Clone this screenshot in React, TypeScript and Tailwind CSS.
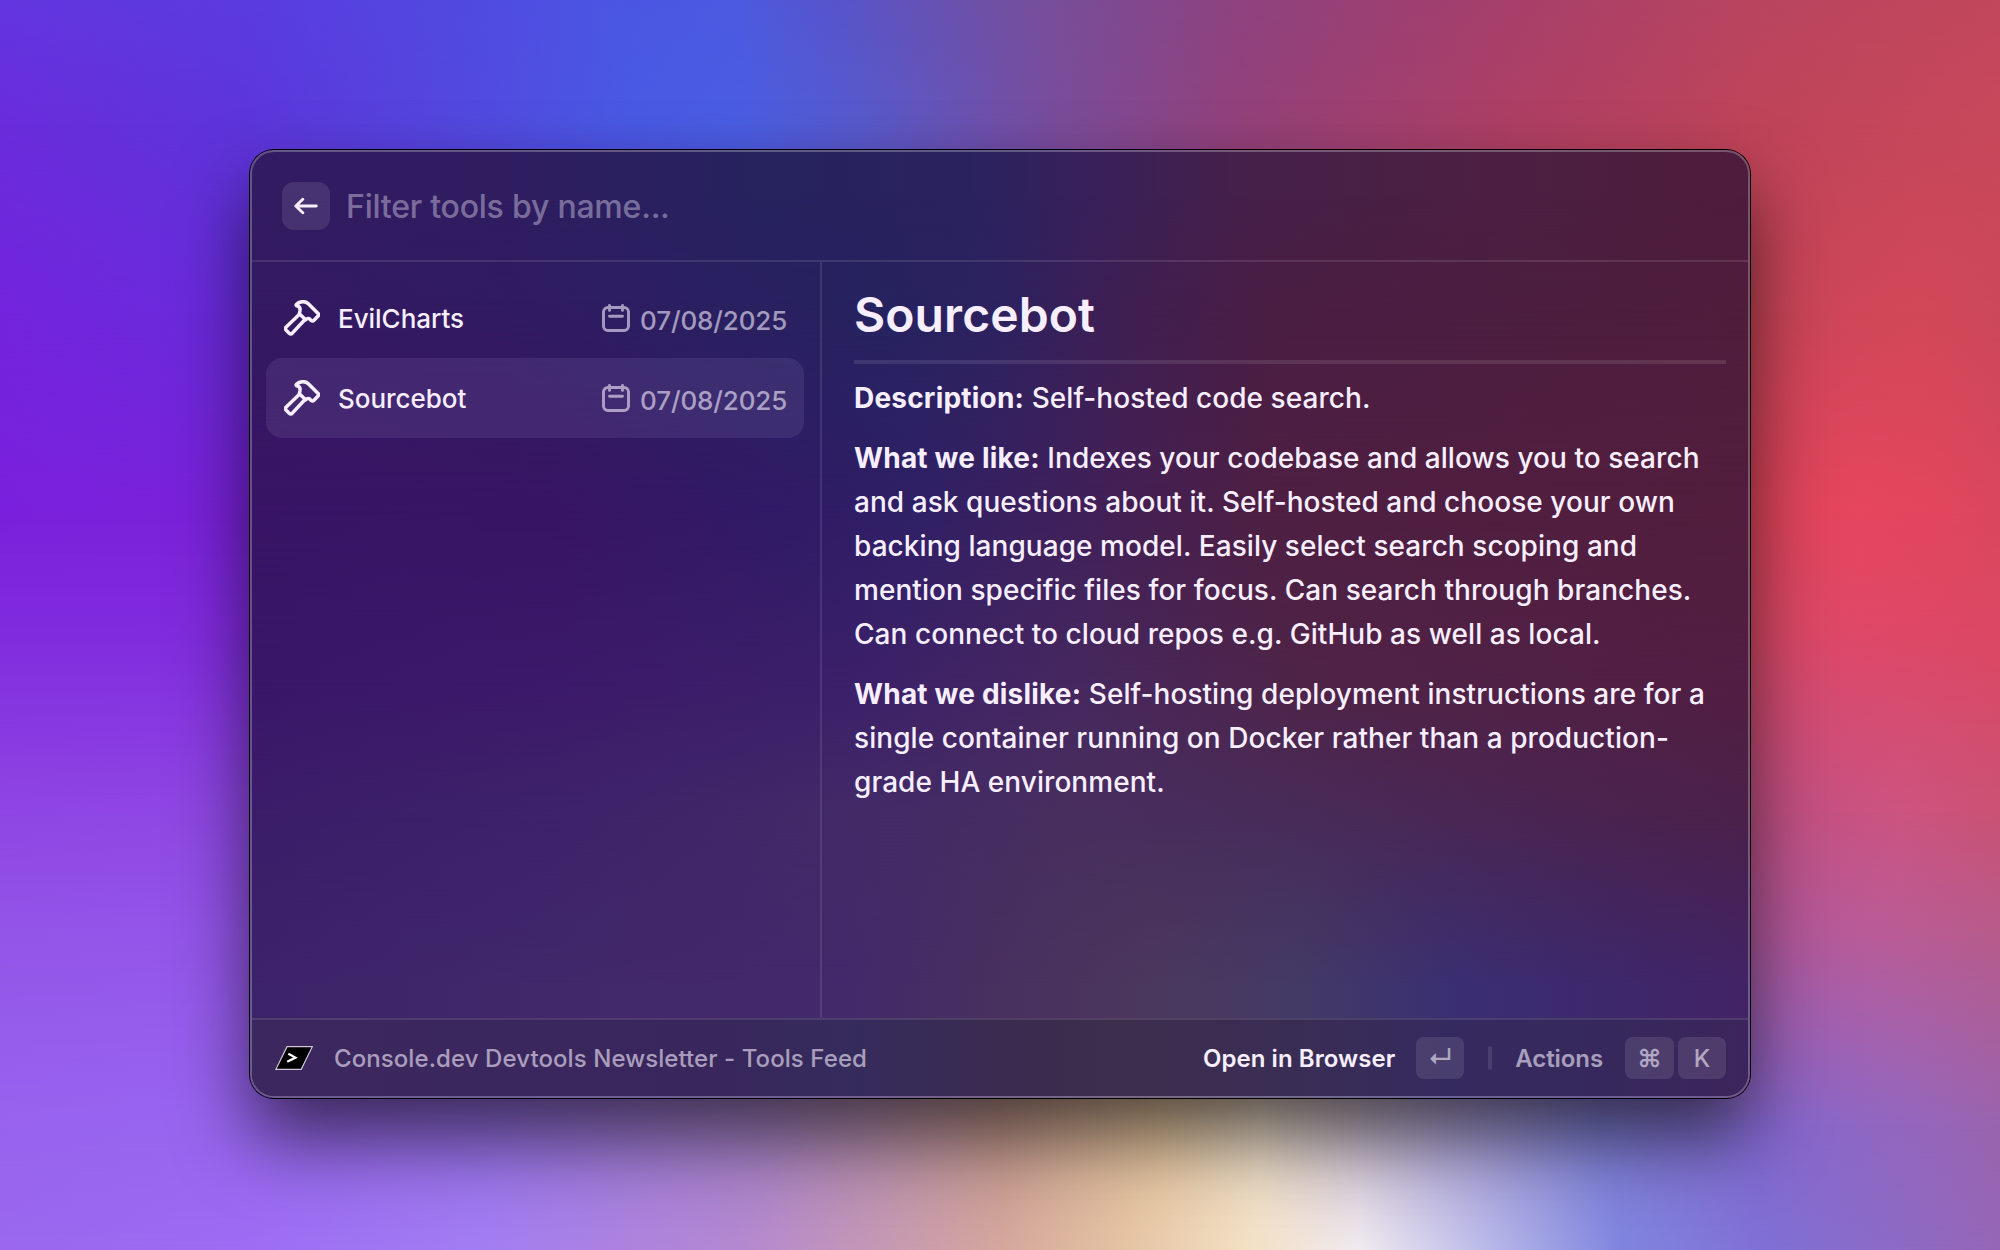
import React from 'react';

function Backdrop() {
  return (
    <div className="col-start-1 row-start-1 grid h-[1250px] w-[2000px] [&>*]:col-start-1 [&>*]:row-start-1">
      <div className="bg-[linear-gradient(90deg,#6335e0_0%,#5b3bdf_12%,#504be1_24%,#4b57e3_31%,#4c5ae0_37%,#5854ca_42%,#74509f_51%,#8e427f_62%,#a63f6b_75%,#b9455f_88%,#c2475c_100%)]" />
      <div className="bg-[linear-gradient(90deg,#6a2cdc_0%,#5d35da_12%,#524adf_24%,#4959e3_31%,#4a5ee2_37%,#575acc_43%,#7a4c9a_53%,#93417a_62%,#ad3f65_75%,#bf4459_88%,#c8485b_100%)] [mask-image:linear-gradient(180deg,transparent_0%,#000_10%)]" />
      <div className="bg-[linear-gradient(90deg,#7324dc_0%,#692cdc_12%,#5540d8_35%,#8a3c80_60%,#c04158_80%,#cc4658_90%,#d24858_96%,#cc4859_100%)] [mask-image:linear-gradient(180deg,transparent_10%,#000_25%)]" />
      <div className="bg-[linear-gradient(90deg,#7a20dc_0%,#7a22da_12%,#7030c8_35%,#a83c70_60%,#dc4458_85%,#e6465e_93%,#e2465d_97%,#da475d_100%)] [mask-image:linear-gradient(180deg,transparent_25%,#000_41%)]" />
      <div className="bg-[linear-gradient(90deg,#812cde_0%,#812cde_12%,#7b3ccd_35%,#a8507a_60%,#d84a68_85%,#de4868_93%,#dc4864_100%)] [mask-image:linear-gradient(180deg,transparent_41%,#000_51%)]" />
      <div className="bg-[linear-gradient(90deg,#8f46e3_0%,#8f48e4_12%,#8c5ccf_35%,#a8707a_60%,#c05084_88%,#cc5480_95%,#ca5274_100%)] [mask-image:linear-gradient(180deg,transparent_51%,#000_65%)]" />
      <div className="bg-[linear-gradient(90deg,#9355e8_0%,#9456ea_12%,#9268d8_35%,#b88c80_58%,#9460b0_75%,#b0589c_88%,#b85c98_94%,#b65c8c_100%)] [mask-image:linear-gradient(180deg,transparent_65%,#000_75%)]" />
      <div className="bg-[linear-gradient(90deg,#9863ee_0%,#9866f0_12%,#9a74ea_25%,#a884c8_38%,#c89c90_50%,#e8c8a0_58%,#ecdcc8_63%,#b4a8d8_72%,#8080d8_80%,#8468d0_88%,#9466bc_96%,#9a64ae_100%)] [mask-image:linear-gradient(180deg,transparent_75%,#000_90%)]" />
      <div className="bg-[linear-gradient(90deg,#9a67ee_0%,#9c6cf3_12%,#a27df2_24%,#b488d0_37%,#d4a69c_50%,#e4c2a2_56%,#f3e0c4_62.5%,#f0eaf0_68%,#bcbce9_74%,#8085de_81%,#7f70d6_88%,#8e69c2_96%,#9566b6_100%)] [mask-image:linear-gradient(180deg,transparent_90%,#000_100%)]" />
      <div className="self-end border-b border-dashed border-black/60" />
    </div>
  );
}

function WindowTint() {
  return (
    <div className="col-start-1 row-start-1 grid [&>*]:col-start-1 [&>*]:row-start-1">
      <div className="bg-[linear-gradient(90deg,#331b61_0%,#2f1d60_17%,#26235f_34%,#2a225f_48%,#38205a_56%,#462048_67%,#4c1f42_83%,#4e1c3c_100%)]" />
      <div className="bg-[linear-gradient(90deg,#341a62_0%,#311b62_17%,#2a2061_31%,#26235f_42%,#2d2260_50%,#3d1f54_57%,#4a1e44_68%,#4f1e3c_100%)] [mask-image:linear-gradient(180deg,transparent_5%,#000_16%)]" />
      <div className="bg-[linear-gradient(90deg,#391465_0%,#381564_20%,#301b66_36%,#2f2066_44%,#40205a_55%,#4e1f42_68%,#531e3d_100%)] [mask-image:linear-gradient(180deg,transparent_16%,#000_38%)]" />
      <div className="bg-[linear-gradient(90deg,#3a1768_0%,#3c1a6a_20%,#3c206a_40%,#46285f_55%,#4f2448_70%,#521e43_100%)] [mask-image:linear-gradient(180deg,transparent_38%,#000_57%)]" />
      <div className="bg-[linear-gradient(90deg,#3b1d6a_0%,#3e226a_20%,#432b67_42%,#482e5e_55%,#482c5a_68%,#4a2552_85%,#4b2149_100%)] [mask-image:linear-gradient(180deg,transparent_57%,#000_70%)]" />
      <div className="bg-[linear-gradient(90deg,#3d2369_0%,#40286b_20%,#43296a_40%,#48305f_50%,#4b385d_60%,#433a66_70%,#3a2f72_80%,#3d286c_90%,#422366_100%)] [mask-image:linear-gradient(180deg,transparent_70%,#000_88%)]" />
    </div>
  );
}

function HammerIcon() {
  return (
    <svg width="36" height="36" viewBox="43 30 108 108" fill="none" stroke="#f7efff" strokeWidth="10.500" strokeLinecap="round" strokeLinejoin="round">
      <path d="M87 75 49 111.500c-2.500 2.500-2.500 6 0 8.500l9.500 9.500c3 3 6.500 3 9.500 0L106 88.500" />
      <path d="M89 71 108 89C113 84 119 85 123 90c3 3.500 7 3.500 10 .5l11.500-11.500c3-3 3-6.500 0-9.500L116 41C107 32.500 90 32.500 80 43.500c-1.500 2-.5 3.500 1.500 4 7 1.500 10.500 7 9.500 14Z" />
    </svg>
  );
}

function CalendarIcon() {
  return (
    <svg width="28" height="28" viewBox="0 0 28 28" fill="none" stroke="currentColor" strokeWidth="2.900" strokeLinecap="round">
      <path d="M6 3.450H22a4.500 4.500 0 0 1 4.500 4.500V22a4.500 4.500 0 0 1-4.500 4.500H6A4.500 4.500 0 0 1 1.500 22V8A4.500 4.500 0 0 1 6 3.450ZM7.500 1.500v4.900M20.500 1.500v4.900M7.500 12.200h13" />
    </svg>
  );
}

function Row({ name, date, selected }: { name: string; date: string; selected?: boolean }) {
  return (
    <div className={selected ? 'flex h-20 items-center rounded-2xl bg-[#e0d0ff]/[0.09] pr-4 pl-[18px]' : 'flex h-20 items-center rounded-2xl pr-4 pl-[18px]'}>
      <HammerIcon />
      <span className="ml-[18px] text-[26px] font-medium tracking-[-0.03px] text-[#f7efff]">{name}</span>
      <span className="ml-auto flex items-center gap-2.5 text-[#f7efff]/60">
        <CalendarIcon />
        <span className="w-[148px] pt-1 text-[26px] font-medium tracking-[-0.12px]">{date}</span>
      </span>
    </div>
  );
}

function Key({ children, wide }: { children: React.ReactNode; wide?: boolean }) {
  return (
    <kbd className={wide ? 'flex h-[42px] w-[49px] items-center justify-center rounded-lg bg-white/10 font-[Inter] text-2xl font-medium text-[#f7efff]/60' : 'flex h-[42px] w-12 items-center justify-center rounded-lg bg-white/10 font-[Inter] text-2xl font-medium text-[#f7efff]/60'}>
      {children}
    </kbd>
  );
}

export default function App() {
  return (
    <div className="grid h-[1250px] w-[2000px] overflow-hidden font-[Inter,sans-serif]">
      <Backdrop />
      <div className="z-10 col-start-1 row-start-1 mt-[150px] ml-[250px] grid h-[948px] w-[1500px] overflow-hidden rounded-3xl shadow-[0_0_0_1px_#000,0_40px_76px_rgba(0,0,0,0.62)]">
        <WindowTint />
        <div className="z-10 col-start-1 row-start-1 flex flex-col overflow-hidden rounded-3xl border-2 border-white/25">
          <header className="flex h-[110px] shrink-0 items-center gap-4 border-b-2 border-white/10 pl-[30px]">
            <button className="flex size-12 items-center justify-center rounded-xl bg-white/10">
              <svg width="24" height="18" viewBox="0 0 24 18" fill="none" stroke="#f7efff" strokeWidth="2.900" strokeLinecap="round" strokeLinejoin="round">
                <path d="M22.300 9H2M8.800 2.200 1.800 9l7 6.800" />
              </svg>
            </button>
            <span className="pt-0.5 text-[32px] font-medium tracking-[-0.22px] text-[#f7efff]/40">Filter tools by name...</span>
          </header>

          <main className="flex min-h-0 flex-1">
            <aside className="w-[570px] shrink-0 border-r-2 border-white/10 px-4 pt-4 pl-3.5">
              <Row name="EvilCharts" date="07/08/2025" />
              <Row name="Sourcebot" date="07/08/2025" selected />
            </aside>
            <article className="flex-1 pt-[29px] pr-[22px] pl-8 text-[#f7efff]">
              <h1 className="mb-[21px] text-5xl leading-[48px] font-semibold tracking-[0.08px]">Sourcebot</h1>
              <hr className="mb-3 border-t-4 border-white/10" />
              <div className="flex flex-col gap-4 text-[28px] leading-[44px] font-medium tracking-[0.055px]">
                <p><b className="font-bold tracking-[0.2px]">Description:</b> Self-hosted code search.</p>
                <p>
                  <b className="font-bold tracking-[0.2px]">What we like:</b> Indexes your codebase and allows you to search and ask questions about it. Self-hosted and choose your own backing language model. Easily select search scoping and mention specific files for focus. Can search through branches. Can connect to cloud repos e.g. GitHub as well as local.
                </p>
                <p>
                  <b className="font-bold tracking-[0.2px]">What we dislike:</b> Self-hosting deployment instructions are for a single container running on Docker rather than a production-grade HA environment.
                </p>
              </div>
            </article>
          </main>

          <footer className="flex h-[78px] shrink-0 items-center border-t-2 border-white/10 bg-[linear-gradient(90deg,#3c285f_0%,#39265c_30%,#352b5c_40%,#3a2b50_50%,#3d2e4e_58%,#3a2d55_70%,#352a5f_80%,#36285c_90%,#3c255c_100%)] bg-origin-border pr-[22px] pl-[22px] text-2xl font-medium">
            <svg width="40" height="26" viewBox="0 0 40 26">
              <path d="M13 1.700H38.300L27.200 24.300H1.900Z" fill="#000" stroke="#cfc6dc" strokeWidth="1.200" />
              <path d="M14.300 8.700 21.500 12.600 13.200 16.800" fill="none" stroke="#fff" strokeWidth="2.200" />
            </svg>
            <span className="ml-5 pt-0.5 tracking-[0.08px] text-[#f7efff]/60">Console.dev Devtools Newsletter - Tools Feed</span>
            <span className="mr-[21px] ml-auto pt-0.5 font-semibold tracking-[0.05px] text-[#f7efff]">Open in Browser</span>
            <Key><span className="pt-0.5 text-[25px]">↵</span></Key>
            <span className="mr-[23px] ml-6 h-6 w-1 rounded-full bg-white/10" />
            <span className="mr-[22px] pt-0.5 font-semibold tracking-[-0.08px] text-[#f7efff]/60">Actions</span>
            <div className="flex gap-1">
              <Key wide><span className="pt-0.5 text-[25px] font-semibold">⌘</span></Key>
              <Key><span className="pt-px">K</span></Key>
            </div>
          </footer>
        </div>
      </div>
    </div>
  );
}
